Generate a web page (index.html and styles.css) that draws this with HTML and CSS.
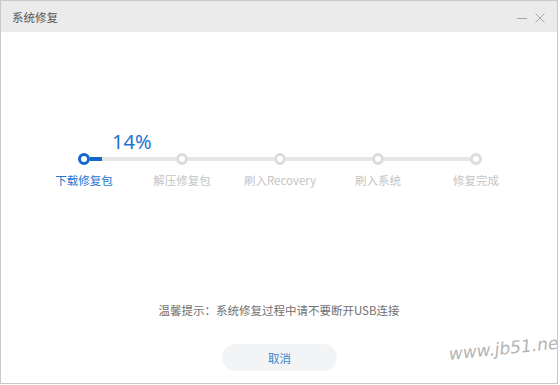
FILE: index.html
```html
<!DOCTYPE html>
<html lang="zh-CN">
<head>
    <meta charset="UTF-8">
    <title>系统修复</title>
    <link rel="stylesheet" href="styles.css">
</head>
<body>
    <div class="window">
        <div class="titlebar">
            <div class="title">系统修复</div>
            <div class="controls">
                <svg class="ctrl" width="12" height="12" viewBox="0 0 12 12"><path d="M1 6.5h10" stroke="#a8a8a8" stroke-width="1"/></svg>
                <svg class="ctrl" width="12" height="12" viewBox="0 0 12 12"><path d="M1.5 1.5l9 9M10.5 1.5l-9 9" stroke="#a8a8a8" stroke-width="1"/></svg>
            </div>
        </div>
        <div class="content">
            <div class="percent">14%</div>
            <div class="track">
                <div class="node active"></div>
                <div class="seg"><div class="fill" style="width: 14%"></div></div>
                <div class="node"></div>
                <div class="seg"></div>
                <div class="node"></div>
                <div class="seg"></div>
                <div class="node"></div>
                <div class="seg"></div>
                <div class="node"></div>
            </div>
            <div class="labels">
                <div class="label current">下载修复包</div>
                <div class="label">解压修复包</div>
                <div class="label">刷入Recovery</div>
                <div class="label">刷入系统</div>
                <div class="label">修复完成</div>
            </div>
            <div class="hint">温馨提示：系统修复过程中请不要断开USB连接</div>
            <div class="actions">
                <div class="btn">取消</div>
            </div>
        </div>
        <div class="watermark">www.jb51.net</div>
    </div>
</body>
</html>
```

FILE: styles.css
```css
body {
    margin: 0;
    font-family: "Noto Sans CJK SC", "Microsoft YaHei", sans-serif;
    background: #fff;
}

.window {
    position: relative;
    width: 558px;
    height: 384px;
    box-sizing: border-box;
    border: 1px solid #c9c9c9;
    background: #fff;
    overflow: hidden;
}

.titlebar {
    height: 31px;
    background: #ebebeb;
    display: flex;
    align-items: center;
    justify-content: space-between;
    padding: 0 11px 0 11px;
}

.title {
    font-size: 11.5px;
    color: #555;
}

.controls {
    display: flex;
    gap: 6px;
    margin-top: 2px;
}

.content {
    padding-top: 100px;
}

.percent {
    font-family: "Noto Sans", sans-serif;
    font-size: 20px;
    line-height: 20px;
    color: #1f74d0;
    padding-left: 111px;
}

.track {
    display: flex;
    align-items: center;
    margin-top: 1px;
    padding-left: 77px;
    height: 12px;
}

.node {
    width: 6px;
    height: 6px;
    border: 3px solid #dcdcdc;
    border-radius: 50%;
    background: #fff;
    flex: none;
}

.node.active {
    border-color: #1467cc;
}

.seg {
    width: 86px;
    height: 4px;
    background: #e6e6e6;
}

.fill {
    height: 100%;
    background: #1467cc;
}

.labels {
    display: flex;
    padding-left: 34px;
    margin-top: 7px;
}

.label {
    width: 98px;
    text-align: center;
    font-size: 11.5px;
    line-height: 16px;
    color: #c4c4c4;
}

.label.current {
    color: #1f74d0;
}

.hint {
    margin-top: 114px;
    text-align: center;
    font-size: 11.5px;
    line-height: 16px;
    color: #707070;
}

.actions {
    display: flex;
    padding-left: 221px;
    margin-top: 26px;
}

.btn {
    width: 115px;
    height: 27px;
    border-radius: 14px;
    background: #f3f4f6;
    color: #3b82cc;
    font-size: 11.5px;
    display: flex;
    align-items: center;
    justify-content: center;
}

.watermark {
    position: absolute;
    left: 449px;
    top: 343px;
    font-family: "DejaVu Sans", sans-serif;
    font-style: italic;
    font-size: 17px;
    color: #b4b4b4;
    transform: rotate(-6deg);
    transform-origin: left bottom;
    white-space: nowrap;
}
```
